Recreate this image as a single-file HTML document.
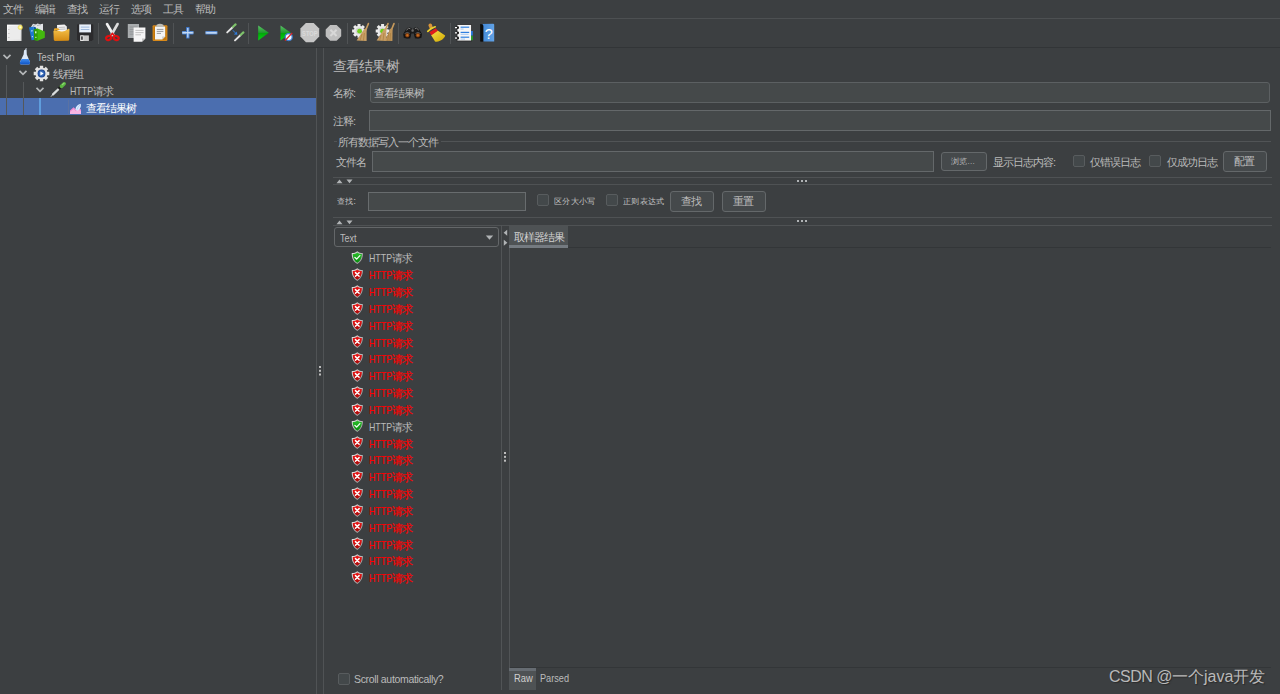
<!DOCTYPE html>
<html lang="zh">
<head>
<meta charset="utf-8">
<title>Apache JMeter</title>
<style>
*{box-sizing:border-box;margin:0;padding:0}
html,body{width:1280px;height:694px;overflow:hidden;background:#3c3f41}
body{position:relative;font-family:"Liberation Sans",sans-serif;font-size:10px;color:#bbbbbb;line-height:12px}
.a{position:absolute;white-space:nowrap}
.t{position:absolute;white-space:nowrap;line-height:12px;height:12px;font-size:11px;letter-spacing:-1px}
.s8{font-size:9px !important;letter-spacing:0 !important;transform:scale(0.92);transform-origin:0 50%;color:#c4c4c4}
.field{position:absolute;background:#45494a;border:1px solid #5f6365;border-radius:2px}
.btn{position:absolute;background:#45494b;border:1px solid #64686a;border-radius:3px;text-align:center;color:#bbbbbb;font-size:11px;letter-spacing:-1px;padding-right:2px}
.cb{position:absolute;width:12px;height:12px;background:#43484a;border:1px solid #585c5e;border-radius:2px}
.hl{position:absolute;height:1px}
.vl{position:absolute;width:1px}
.red{color:#ff0000;-webkit-text-stroke:0.15px #ff0000}
.rt{position:absolute;left:369px;white-space:nowrap;font-size:11px;letter-spacing:-1px;line-height:12px;height:12px}
.lat{display:inline-block;font-size:10.5px;letter-spacing:0;transform:scaleX(0.84);transform-origin:0 50%;margin-right:-4.4px}
.en{letter-spacing:0;font-size:10.5px;transform-origin:0 50%}

</style>
</head>
<body>
<svg width="0" height="0" style="position:absolute">
<defs>
<linearGradient id="gOk" x1="0" y1="0" x2="0" y2="1"><stop offset="0" stop-color="#2cc02c"/><stop offset="1" stop-color="#068a0c"/></linearGradient>
<linearGradient id="gErr" x1="0" y1="0" x2="0" y2="1"><stop offset="0" stop-color="#f01818"/><stop offset="1" stop-color="#a80606"/></linearGradient>
<linearGradient id="gSil" x1="0" y1="0" x2="1" y2="1"><stop offset="0" stop-color="#e8e8e8"/><stop offset="1" stop-color="#8a8a8a"/></linearGradient>
<g id="shOk">
<path d="M6.5 0.3 C5 1.6 3 2.2 0.8 2.2 C0.5 6.5 2 10.8 6.5 13.4 C11 10.8 12.5 6.5 12.2 2.2 C10 2.2 8 1.6 6.5 0.3Z" fill="url(#gSil)"/>
<path d="M6.5 1.5 C5.2 2.5 3.6 3.1 1.8 3.2 C1.7 6.6 2.9 10 6.5 12.3 C10.1 10 11.3 6.6 11.2 3.2 C9.4 3.1 7.8 2.5 6.5 1.5Z" fill="url(#gOk)"/>
<path d="M4 6.6 L5.8 8.4 L9.2 4.8" fill="none" stroke="#f4fff4" stroke-width="1.4" stroke-linecap="round" stroke-linejoin="round"/>
</g>
<g id="shErr">
<path d="M6.5 0.3 C5 1.6 3 2.2 0.8 2.2 C0.5 6.5 2 10.8 6.5 13.4 C11 10.8 12.5 6.5 12.2 2.2 C10 2.2 8 1.6 6.5 0.3Z" fill="url(#gSil)"/>
<path d="M6.5 1.5 C5.2 2.5 3.6 3.1 1.8 3.2 C1.7 6.6 2.9 10 6.5 12.3 C10.1 10 11.3 6.6 11.2 3.2 C9.4 3.1 7.8 2.5 6.5 1.5Z" fill="url(#gErr)"/>
<path d="M4.6 4.8 L8.4 8.6 M8.4 4.8 L4.6 8.6" fill="none" stroke="#fff" stroke-width="1.5" stroke-linecap="round"/>
</g>
</defs>
</svg>

<!-- menu bar -->
<div class="t" style="left:3px;top:2.5px">文件</div>
<div class="t" style="left:35px;top:2.5px">编辑</div>
<div class="t" style="left:67px;top:2.5px">查找</div>
<div class="t" style="left:99px;top:2.5px">运行</div>
<div class="t" style="left:131px;top:2.5px">选项</div>
<div class="t" style="left:163px;top:2.5px">工具</div>
<div class="t" style="left:195px;top:2.5px">帮助</div>
<div class="hl" style="left:0;top:18px;width:1280px;background:#4d5052"></div>
<div class="hl" style="left:0;top:47px;width:1280px;background:#323537"></div>

<!-- toolbar icons -->
<svg class="a" style="left:0;top:19px" width="520" height="28" viewBox="0 19 520 28">
<defs>
<linearGradient id="gPage" x1="0" y1="0" x2="1" y2="1"><stop offset="0" stop-color="#ffffff"/><stop offset="1" stop-color="#d9d9d9"/></linearGradient>
<linearGradient id="gFold" x1="0" y1="0" x2="0" y2="1"><stop offset="0" stop-color="#f5c24a"/><stop offset="1" stop-color="#d48a12"/></linearGradient>
<linearGradient id="gRun" x1="0" y1="0" x2="0" y2="1"><stop offset="0" stop-color="#5fc46a"/><stop offset="0.48" stop-color="#1f9a2c"/><stop offset="0.52" stop-color="#00a808"/><stop offset="1" stop-color="#08d414"/></linearGradient>
<linearGradient id="gBroomY" x1="0" y1="0" x2="1" y2="1"><stop offset="0" stop-color="#f6e04a"/><stop offset="1" stop-color="#d0a800"/></linearGradient>
<linearGradient id="gBlueBk" x1="0" y1="0" x2="1" y2="0"><stop offset="0" stop-color="#3f86d6"/><stop offset="1" stop-color="#62a3e6"/></linearGradient>
<linearGradient id="gPlus" x1="0" y1="0" x2="0" y2="1"><stop offset="0" stop-color="#3a74c8"/><stop offset="0.5" stop-color="#a9c8ee"/><stop offset="1" stop-color="#3a74c8"/></linearGradient>
<radialGradient id="gLens"><stop offset="0" stop-color="#e0802a"/><stop offset="1" stop-color="#6a2c06"/></radialGradient>
<radialGradient id="gStar"><stop offset="0" stop-color="#ffffff"/><stop offset="0.45" stop-color="#fff27a"/><stop offset="1" stop-color="#e8d23a" stop-opacity="0.6"/></radialGradient>
</defs>
<!-- separators -->
<g fill="#505355">
<rect x="98" y="23" width="1" height="21"/><rect x="173" y="23" width="1" height="21"/><rect x="248" y="23" width="1" height="21"/>
<rect x="347" y="23" width="1" height="21"/><rect x="398" y="23" width="1" height="21"/><rect x="450" y="23" width="1" height="21"/>
</g>
<!-- new -->
<rect x="7" y="24.6" width="14.5" height="16.4" fill="url(#gPage)"/>
<rect x="8.4" y="26" width="11.8" height="13.6" fill="#ececec"/>
<rect x="8" y="29" width="1.6" height="0.9" fill="#c8c8c8"/><rect x="8" y="33" width="1.6" height="0.9" fill="#c8c8c8"/><rect x="8" y="37" width="1.6" height="0.9" fill="#c8c8c8"/>
<circle cx="20.3" cy="27.3" r="2.6" fill="url(#gStar)"/>
<!-- templates -->
<path d="M31 27 L33 23.8 L36 24.4 L37.5 23.6 L40 24.3 L43 23.7 L43 33 L31 33Z" fill="#e4e6e8"/>
<path d="M33 25.5 L35.5 24.8 M37 25.5 L41 24.6" stroke="#9aa0a6" stroke-width="0.8"/>
<path d="M29 27.6 L33.5 26.4 L35.6 39.6 L31.6 40.2Z" fill="#1e78d2"/>
<path d="M33.5 26.4 L36 27.5 L36.5 40.6 L35.6 39.6Z" fill="#0e57a4"/>
<path d="M33.8 29.5 L37.5 28.5 L44.8 31.5 L44.8 37.8 L37.6 40.8 L34.2 40Z" fill="#43b80e"/>
<path d="M33.8 29.5 L37.5 28.5 L37.6 40.8 L34.2 40Z" fill="#2f9a06"/>
<rect x="31" y="30.5" width="1.6" height="1" fill="#cfe6ff" transform="rotate(-12 31 30.5)"/><rect x="31.8" y="36.2" width="1.2" height="1" fill="#cfe6ff"/>
<rect x="35" y="31.3" width="1.5" height="2" fill="#d4f5bf"/><rect x="35.2" y="36.8" width="1.3" height="1" fill="#d4f5bf"/>
<!-- open -->
<path d="M57 25 L64.5 24.4 L66.8 26.6 L67 33 L57.4 33Z" fill="#f4f4f4"/>
<path d="M58.5 27.5 L65.3 27.1 M58.5 29.4 L65.6 29" stroke="#b8b8b8" stroke-width="0.9"/>
<path d="M54 29.2 Q54 28.2 55 28.2 L58.4 28.2 L59.6 30 L53.8 31Z" fill="#e9a625"/>
<path d="M53.4 31 Q59 30.2 61 31.4 Q63.5 32.4 68.6 28.8 Q69.6 28.6 69.5 30 L69.2 39.6 Q69.1 40.8 68 40.8 L55 40.9 Q53.9 40.9 53.8 39.8Z" fill="url(#gFold)"/>
<!-- save -->
<path d="M77 25 Q77 24.2 77.8 24.2 L92.4 24.2 Q93.3 24.2 93.3 25 L93.3 39.2 L91.8 41 L78.5 41 L77 39.4Z" fill="#2b2b2d"/>
<rect x="79.2" y="24.4" width="11.8" height="8" fill="#e8f0fa"/>
<rect x="80.8" y="26.6" width="8.6" height="1" fill="#9db8dc"/><rect x="80.8" y="29" width="8.6" height="1" fill="#9db8dc"/>
<rect x="80.3" y="35.4" width="8.6" height="5.6" fill="#c9c9c9"/>
<rect x="80.3" y="35.4" width="3.2" height="5.6" fill="#e6e6e6"/>
<rect x="81.2" y="36.4" width="1.5" height="3.4" fill="#2b2b2d"/>
<!-- cut -->
<path d="M107 24 L114 36" stroke="#f2f2f2" stroke-width="2.6" stroke-linecap="round"/>
<path d="M117.6 24 L110.8 36" stroke="#dcdcdc" stroke-width="2.6" stroke-linecap="round"/>
<ellipse cx="108.6" cy="38" rx="2.6" ry="2" fill="none" stroke="#e01010" stroke-width="2.2" transform="rotate(-25 108.6 38)"/>
<ellipse cx="116.2" cy="38" rx="2.6" ry="2" fill="none" stroke="#e01010" stroke-width="2.2" transform="rotate(25 116.2 38)"/>
<path d="M110.4 35.6 L112.4 33.4 L114.4 35.6" stroke="#e01010" stroke-width="1.6" fill="none"/>
<!-- copy -->
<rect x="127.8" y="24" width="11.2" height="14" fill="#a9adaf"/>
<path d="M129.6 27 H137.4 M129.6 29.4 H137.4 M129.6 31.8 H137.4 M129.6 34.2 H137.4" stroke="#8d9193" stroke-width="0.8"/>
<path d="M133.6 27.4 L145.4 27.4 L145.4 38.4 L142 41.8 L133.6 41.8Z" fill="#f6f6f6"/>
<path d="M145.4 38.4 L142 38.4 L142 41.8Z" fill="#c4c4c4"/>
<path d="M135.4 30.4 H143.6 M135.4 32.6 H143.6 M135.4 34.8 H141" stroke="#bcbcbc" stroke-width="0.9"/>
<!-- paste -->
<rect x="152.6" y="25.2" width="14.8" height="15.8" rx="1" fill="#d98a1a"/>
<rect x="153.6" y="26.2" width="12.8" height="13.8" rx="0.6" fill="#c27608"/>
<path d="M155 26.4 L165.2 26.4 L165.2 36.6 L162.2 39.6 L155 39.6Z" fill="#f4f4f4"/>
<path d="M165.2 36.6 L162.2 36.6 L162.2 39.6Z" fill="#cccccc"/>
<path d="M156.6 24.8 Q160 22.6 163.4 24.8 L163.8 27 L156.2 27Z" fill="#bdbcb4"/>
<path d="M156.8 29.4 H163.4 M156.8 31.4 H163.4 M156.8 33.4 H161" stroke="#8e8e8e" stroke-width="0.9"/>
<!-- plus / minus -->
<rect x="182" y="31" width="11.6" height="3.4" rx="0.6" fill="url(#gPlus)"/>
<rect x="186.1" y="27" width="3.4" height="11.6" rx="0.6" fill="#3f78cc"/>
<rect x="187.1" y="28" width="1.4" height="9.6" fill="#b8d2f0"/>
<rect x="183" y="32" width="9.6" height="1.4" fill="#c4daf4"/>
<rect x="205.4" y="31" width="12" height="3.6" rx="0.6" fill="url(#gPlus)"/>
<rect x="206.4" y="32.1" width="10" height="1.4" fill="#c4daf4"/>
<!-- toggle -->
<path d="M227.2 32.4 L232.6 27.2" stroke="#e4e4e4" stroke-width="1.9" stroke-linecap="round"/>
<path d="M233 26.8 L235.6 24.4" stroke="#7dc26a" stroke-width="2.2" stroke-linecap="round"/>
<path d="M235 40.4 L240.4 35.2" stroke="#e4e4e4" stroke-width="1.9" stroke-linecap="round"/>
<path d="M240.8 34.8 L243.4 32.4" stroke="#7dc26a" stroke-width="2.2" stroke-linecap="round"/>
<path d="M232.6 30.2 L235.8 33.2" stroke="#2f7ad8" stroke-width="1" fill="none"/>
<path d="M237.4 34.8 L233.8 34.4 L236.8 31.4Z" fill="#2f7ad8"/>
<!-- run -->
<path d="M258.2 25.4 L268.8 32.8 L258.2 40.4Z" fill="url(#gRun)"/>
<!-- run no timers -->
<path d="M280.5 25.4 L290.8 32.8 L280.5 40.4Z" fill="url(#gRun)"/>
<circle cx="288.7" cy="37.1" r="3.5" fill="#f4f8ff" stroke="#3f7fd0" stroke-width="1.2"/>
<path d="M285 40.6 L292.2 33" stroke="#e02020" stroke-width="1.2"/>
<!-- stop -->
<path d="M305.9 23 L313.7 23 L319.2 28.6 L319.2 36.6 L313.7 42.2 L305.9 42.2 L300.4 36.6 L300.4 28.6Z" fill="#c6c6c6"/>
<text x="309.8" y="35.5" text-anchor="middle" font-family="Liberation Sans, sans-serif" font-weight="bold" font-size="7.6" fill="#dadada" textLength="15.4" lengthAdjust="spacingAndGlyphs">STOP</text>
<!-- shutdown -->
<path d="M330.2 25 L336.6 25 L341.2 29.6 L341.2 36.2 L336.6 40.8 L330.2 40.8 L325.7 36.2 L325.7 29.6Z" fill="#bfbfbf"/>
<path d="M330.4 29.8 L336.6 36 M336.6 29.8 L330.4 36" stroke="#d8d8d8" stroke-width="2"/>
<!-- clear -->
<g id="gearW">
<circle cx="359" cy="30.9" r="5.2" fill="#ececec"/>
<g stroke="#ececec" stroke-width="3" stroke-linecap="butt">
<path d="M359 24 V37.8 M352.1 30.9 H365.9 M354.1 26 L363.9 35.8 M363.9 26 L354.1 35.8"/>
</g>
<circle cx="359" cy="30.9" r="3.4" fill="#d2d2d2"/>
</g>
<circle cx="359.6" cy="31.2" r="2.4" fill="#6fcf1c"/>
<path d="M368.4 23.6 L365.6 30.4" stroke="#c69a5c" stroke-width="1.6" stroke-linecap="round"/>
<path d="M366.6 28.4 L366.6 41 L356.6 40.6 L364.4 28.8Z" fill="#c9a066"/>
<path d="M362 34 L360 40.6 M364.4 33 L363.4 40.8" stroke="#a77c3e" stroke-width="0.7"/>
<!-- clear all -->
<use href="#gearW" x="23.6"/>
<circle cx="382.6" cy="31.2" r="2.4" fill="#6fcf1c"/>
<path d="M388 23.6 L385.2 30.4" stroke="#c69a5c" stroke-width="1.6" stroke-linecap="round"/>
<path d="M386.4 28.4 L386.4 41 L376.6 40.6 L384.2 28.8Z" fill="#c9a066"/>
<path d="M394 23.6 L391.2 30.4" stroke="#c69a5c" stroke-width="1.6" stroke-linecap="round"/>
<path d="M392.6 28.4 L392.4 41 L385 40.8 L390.2 28.8Z" fill="#bf9458"/>
<path d="M381 35 L379.6 40.6 M384 33 L383 40.8 M388.6 34 L387.6 40.8 M390.6 33 L390 40.8" stroke="#a77c3e" stroke-width="0.7"/>
<!-- binoculars -->
<path d="M405.8 29.4 L408.2 27.2 L411 27.8 L412.6 29.6 L414.2 27.8 L417 27.2 L419.4 29.4 L422 34 L421.4 38 L415 38.6 L413.8 33.6 L411.4 33.6 L410.2 38.6 L403.8 38 L403.2 34Z" fill="#1a1a1a"/>
<circle cx="407.2" cy="35" r="3.4" fill="#141414"/><circle cx="418" cy="35" r="3.4" fill="#141414"/>
<path d="M406.4 30.2 L408.6 28.2 L410.4 28.8" stroke="#8a8a8a" stroke-width="0.9" fill="none"/>
<path d="M418.8 30.2 L416.6 28.2 L414.8 28.8" stroke="#8a8a8a" stroke-width="0.9" fill="none"/>
<circle cx="407.3" cy="35.2" r="2.2" fill="url(#gLens)"/><circle cx="417.9" cy="35.2" r="2.2" fill="url(#gLens)"/>
<path d="M404.6 33.6 Q407.2 31.4 409.8 33.4" stroke="#7a7a7a" stroke-width="0.7" fill="none"/>
<path d="M415.4 33.4 Q418 31.4 420.6 33.6" stroke="#7a7a7a" stroke-width="0.7" fill="none"/>
<rect x="411.4" y="29.2" width="2.4" height="2.6" rx="0.8" fill="#6a6a6a"/>
<!-- broom yellow -->
<path d="M428.4 25.6 Q428.6 23.4 430.4 23.6 Q432 23.8 432.2 25.4 L433.2 28.6 L430.4 30 Z" fill="#d9963a"/>
<path d="M431 35 L437.6 30.6 L445.2 35.4 Q444.6 38.4 440 40.8 Q437 42.4 435 41.6 Q433.6 39 431 35Z" fill="url(#gBroomY)"/>
<path d="M429.4 32.2 L435.8 28.2 L437.8 30.8 L431.4 35.2Z" fill="#e01c1c"/>
<path d="M427.8 31.4 Q431 28 435.2 26.8" stroke="#ecd02a" stroke-width="1.7" stroke-linecap="round" fill="none"/>
<!-- function helper -->
<rect x="457" y="24.6" width="14.6" height="16.4" fill="#f6f6f6" stroke="#2a2a2a" stroke-width="0.8"/>
<g fill="#1c1c1c"><rect x="455.4" y="26.2" width="3.6" height="2.8" rx="1.2"/><rect x="455.4" y="31.4" width="3.6" height="2.8" rx="1.2"/><rect x="455.4" y="36.6" width="3.6" height="2.8" rx="1.2"/></g>
<g fill="#ffffff"><rect x="455" y="27" width="2" height="1.3"/><rect x="455" y="32.2" width="2" height="1.3"/><rect x="455" y="37.4" width="2" height="1.3"/></g>
<g fill="#2f7fe0"><rect x="460.6" y="26.6" width="8.6" height="1.2"/><rect x="460.6" y="31.8" width="8.6" height="1.2"/><rect x="460.6" y="36.6" width="8.6" height="1.2"/></g>
<g fill="#9cc2f2"><rect x="460.6" y="28.6" width="3" height="0.9"/><rect x="460.6" y="33.8" width="8" height="0.9"/><rect x="460.6" y="38.6" width="4.4" height="0.9"/></g>
<rect x="471" y="31" width="1.8" height="4.6" fill="#2a7ae0"/><rect x="471" y="35.8" width="1.8" height="4.4" fill="#2aa02a"/>
<!-- help -->
<rect x="480.4" y="24" width="4" height="17.4" fill="#101010"/>
<path d="M481.2 24 L493.4 23.8 L494.2 24.6 L494.2 41.4 L483.4 41.4 L483.4 25.4 Z" fill="url(#gBlueBk)"/>
<rect x="480.4" y="24.4" width="2.6" height="17" fill="#0c0c0c"/>
<text x="488.8" y="38.8" text-anchor="middle" font-family="Liberation Sans, sans-serif" font-size="14.5" fill="#ffffff">?</text>
</svg>

<!-- left tree -->
<div class="a" style="left:0;top:98px;width:316px;height:17px;background:#4b6eaf"></div>
<div class="vl" style="left:6px;top:65px;height:50px;background:#55585a"></div>
<div class="vl" style="left:23px;top:82px;height:33px;background:#55585a"></div>
<div class="vl" style="left:39px;top:98px;height:17px;width:2px;background:#5f9ddc"></div>
<div class="vl" style="left:68px;top:100px;height:14px;background:#5a72a3"></div>
<svg class="a" style="left:2px;top:53px" width="10" height="8" viewBox="0 0 10 8"><path d="M1.5 1.8 L5 5.3 L8.5 1.8" fill="none" stroke="#b4b7b9" stroke-width="1.7"/></svg>
<svg class="a" style="left:18px;top:69px" width="10" height="8" viewBox="0 0 10 8"><path d="M1.5 1.8 L5 5.3 L8.5 1.8" fill="none" stroke="#b4b7b9" stroke-width="1.7"/></svg>
<svg class="a" style="left:35px;top:86px" width="10" height="8" viewBox="0 0 10 8"><path d="M1.5 1.8 L5 5.3 L8.5 1.8" fill="none" stroke="#b4b7b9" stroke-width="1.7"/></svg>
<div class="t en" style="left:36.5px;top:51px;transform:scaleX(0.873)">Test Plan</div>
<div class="t" style="left:53px;top:68px">线程组</div>
<div class="t" style="left:70px;top:85px"><span class="lat">HTTP</span>请求</div>
<div class="t" style="left:86px;top:102px;color:#ffffff">查看结果树</div>
<!-- splitter -->
<div class="vl" style="left:316px;top:48px;height:646px;background:#505355"></div>
<div class="vl" style="left:323px;top:48px;height:646px;background:#505355"></div>
<div class="a" style="left:318.9px;top:365.8px;width:2.2px;height:2.2px;background:#bdbdbd;box-shadow:0 3.8px 0 #bdbdbd,0 7.5px 0 #bdbdbd"></div>
<!-- tree icons -->
<svg class="a" style="left:0;top:48px" width="100" height="70" viewBox="0 48 100 70">
<defs>
<linearGradient id="gFl" x1="0" y1="0" x2="0" y2="1"><stop offset="0" stop-color="#3f8cf0"/><stop offset="1" stop-color="#0d52c4"/></linearGradient>
<radialGradient id="gGb"><stop offset="0" stop-color="#5f9be8"/><stop offset="1" stop-color="#153f8e"/></radialGradient>
</defs>
<!-- flask -->
<path d="M25.6 49.2 L26.6 49.2 L26.8 54.6 L30 62 Q30.4 64.6 28 64.6 L22 64.6 Q19.4 64.6 20 62 L23.6 54.6 L24 50.4Z" fill="#dbe8f8"/>
<path d="M21.6 59 L28.6 59 L30 62 Q30.4 64.6 28 64.6 L22 64.6 Q19.4 64.6 20 62Z" fill="url(#gFl)"/>
<path d="M25.4 49 L26.6 48.4" stroke="#e8eef8" stroke-width="0.8"/>
<!-- gear -->
<g stroke="#e4e4e4" stroke-width="3.4"><path d="M41.5 65.7 V81.3 M33.7 73.5 H49.3 M36 68 L47 79 M47 68 L36 79"/></g>
<circle cx="41.5" cy="73.5" r="6" fill="#e4e4e4"/>
<circle cx="41.5" cy="73.5" r="3.9" fill="url(#gGb)"/>
<path d="M40.4 71.6 L43.6 73.5 L40.4 75.4Z" fill="#ffffff"/>
<!-- pipette -->
<path d="M51.2 96.4 L53 94.2" stroke="#c9c9c9" stroke-width="1" stroke-linecap="round"/>
<path d="M53 94.4 L59.4 88.2" stroke="#d9dcdc" stroke-width="2.2" stroke-linecap="round"/>
<path d="M58.6 88.8 L60.8 86.8" stroke="#1c1c1c" stroke-width="3" />
<path d="M61.4 86.4 L64.2 83.8" stroke="#5ab540" stroke-width="3.6" stroke-linecap="round"/>
<path d="M62.4 84.6 L64 83.2" stroke="#8fd874" stroke-width="1.2" stroke-linecap="round"/>
<!-- result tree -->
<path d="M70 114 L70 110.4 L73.6 107.2 L76 109.6 L78.6 108 L81 109.4 L81 114Z" fill="#f08ad0"/>
<path d="M70 114 L70 112 L73.6 109 L76 111.2 L78.6 110 L81 111 L81 114Z" fill="#f7b4e2"/>
<path d="M75.4 109.4 Q76 104.8 80.8 103.8 Q81.4 108 78.2 110.6 Q76.4 111 75.4 109.4Z" fill="#dcecff"/>
<path d="M77 109.6 Q78 106.4 80.4 104.6" stroke="#9cc4f4" stroke-width="0.7" fill="none"/>
</svg>

<!-- main panel -->
<div class="a" style="left:333px;top:57.4px;font-size:14px;letter-spacing:-0.85px;line-height:18px;color:#bbbbbb">查看结果树</div>
<div class="t" style="left:333px;top:87px">名称:</div>
<div class="field" style="left:370px;top:82px;width:900px;height:21px;border-radius:3px;border-color:#5c6062"></div>
<div class="t" style="left:374px;top:87px">查看结果树</div>
<div class="t" style="left:333px;top:115px">注释:</div>
<div class="field" style="left:369px;top:110px;width:902px;height:21px;border-radius:0;border-color:#64686a"></div>
<!-- titled border -->
<div class="hl" style="left:334px;top:141px;width:3px;background:#515456"></div>
<div class="hl" style="left:441px;top:141px;width:830px;background:#515456"></div>
<div class="t" style="left:338px;top:136px">所有数据写入一个文件</div>
<div class="t" style="left:336px;top:156px">文件名</div>
<div class="field" style="left:372px;top:151px;width:562px;height:21px;border-radius:0;border-color:#64686a"></div>
<div class="btn" style="left:941px;top:152px;width:46px;height:19px;font-size:8px;letter-spacing:0.2px;line-height:17px">浏览...</div>
<div class="t" style="left:993px;top:156px">显示日志内容:</div>
<div class="cb" style="left:1073px;top:155px"></div>
<div class="t" style="left:1090px;top:156px">仅错误日志</div>
<div class="cb" style="left:1149px;top:155px"></div>
<div class="t" style="left:1167px;top:156px">仅成功日志</div>
<div class="btn" style="left:1223px;top:151px;width:44px;height:21px;line-height:19px">配置</div>
<!-- separator 1 -->
<div class="hl" style="left:333px;top:177px;width:939px;background:#4f5254"></div>
<div class="hl" style="left:333px;top:184px;width:939px;background:#4f5254"></div>
<svg class="a" style="left:336px;top:179.3px" width="18" height="5" viewBox="0 0 18 5"><path d="M0.5 4.2 L3.5 0.6 L6.5 4.2Z M10.5 0.6 L16.5 0.6 L13.5 4.2Z" fill="#b0b3b5"/></svg>
<div class="a" style="left:797px;top:180px;width:2px;height:2px;background:#b0b3b5;box-shadow:4px 0 0 #b0b3b5,8px 0 0 #b0b3b5"></div>
<!-- search row -->
<div class="t s8" style="left:337px;top:195px">查找:</div>
<div class="field" style="left:368px;top:192px;width:158px;height:19px;border-radius:0;border-color:#686c6e"></div>
<div class="cb" style="left:537px;top:194px"></div>
<div class="t s8" style="left:554px;top:195px">区分大小写</div>
<div class="cb" style="left:606px;top:194px"></div>
<div class="t s8" style="left:623px;top:195px">正则表达式</div>
<div class="btn" style="left:670px;top:191px;width:44px;height:21px;line-height:19px">查找</div>
<div class="btn" style="left:722px;top:191px;width:44px;height:21px;line-height:19px">重置</div>
<!-- separator 2 -->
<div class="hl" style="left:333px;top:217px;width:939px;background:#4f5254"></div>
<div class="hl" style="left:333px;top:224.5px;width:939px;background:#4f5254"></div>
<svg class="a" style="left:336px;top:219.5px" width="18" height="5" viewBox="0 0 18 5"><path d="M0.5 4.2 L3.5 0.6 L6.5 4.2Z M10.5 0.6 L16.5 0.6 L13.5 4.2Z" fill="#b0b3b5"/></svg>
<div class="a" style="left:797px;top:220px;width:2px;height:2px;background:#b0b3b5;box-shadow:4px 0 0 #b0b3b5,8px 0 0 #b0b3b5"></div>
<!-- combo -->
<div class="a" style="left:334px;top:227px;width:165px;height:20px;border:1px solid #646769;border-radius:3px;background:#3c3f41"></div>
<div class="t en" style="left:339.5px;top:232px;transform:scaleX(0.863)">Text</div>
<svg class="a" style="left:485px;top:235px" width="9" height="6" viewBox="0 0 9 6"><path d="M0.8 0.6 L8.2 0.6 L4.5 4.8Z" fill="#b0b3b5"/></svg>
<!-- inner splitter -->
<div class="vl" style="left:501px;top:225px;height:465px;background:#515456"></div>
<div class="vl" style="left:509px;top:225px;height:465px;background:#515456"></div>
<svg class="a" style="left:503px;top:229px" width="5" height="18" viewBox="0 0 5 18"><path d="M4.2 0.8 L4.2 6.8 L0.6 3.8Z M0.8 10.8 L0.8 16.8 L4.4 13.8Z" fill="#b0b3b5"/></svg>
<div class="a" style="left:504px;top:452.3px;width:2.2px;height:2.2px;background:#bdbdbd;box-shadow:0 3.85px 0 #bdbdbd,0 7.7px 0 #bdbdbd"></div>
<!-- tab -->
<div class="hl" style="left:510px;top:247px;width:761px;background:#333638"></div>
<div class="a" style="left:509px;top:226px;width:59px;height:22px;background:#4e5254"></div>
<div class="a" style="left:509px;top:245px;width:59px;height:3px;background:#747a80"></div>
<div class="t" style="left:514px;top:231px;color:#d0d0d0">取样器结果</div>

<svg class="a" style="left:351.2px;top:251.10px" width="12.6" height="13.5" viewBox="0 0 13 14"><use href="#shOk"/></svg><div class="rt" style="top:252.40px"><span class="lat">HTTP</span>请求</div>
<svg class="a" style="left:351.2px;top:267.93px" width="12.6" height="13.5" viewBox="0 0 13 14"><use href="#shErr"/></svg><div class="rt red" style="top:269.23px"><span class="lat">HTTP</span>请求</div>
<svg class="a" style="left:351.2px;top:284.76px" width="12.6" height="13.5" viewBox="0 0 13 14"><use href="#shErr"/></svg><div class="rt red" style="top:286.06px"><span class="lat">HTTP</span>请求</div>
<svg class="a" style="left:351.2px;top:301.59px" width="12.6" height="13.5" viewBox="0 0 13 14"><use href="#shErr"/></svg><div class="rt red" style="top:302.89px"><span class="lat">HTTP</span>请求</div>
<svg class="a" style="left:351.2px;top:318.42px" width="12.6" height="13.5" viewBox="0 0 13 14"><use href="#shErr"/></svg><div class="rt red" style="top:319.72px"><span class="lat">HTTP</span>请求</div>
<svg class="a" style="left:351.2px;top:335.25px" width="12.6" height="13.5" viewBox="0 0 13 14"><use href="#shErr"/></svg><div class="rt red" style="top:336.55px"><span class="lat">HTTP</span>请求</div>
<svg class="a" style="left:351.2px;top:352.08px" width="12.6" height="13.5" viewBox="0 0 13 14"><use href="#shErr"/></svg><div class="rt red" style="top:353.38px"><span class="lat">HTTP</span>请求</div>
<svg class="a" style="left:351.2px;top:368.91px" width="12.6" height="13.5" viewBox="0 0 13 14"><use href="#shErr"/></svg><div class="rt red" style="top:370.21px"><span class="lat">HTTP</span>请求</div>
<svg class="a" style="left:351.2px;top:385.74px" width="12.6" height="13.5" viewBox="0 0 13 14"><use href="#shErr"/></svg><div class="rt red" style="top:387.04px"><span class="lat">HTTP</span>请求</div>
<svg class="a" style="left:351.2px;top:402.57px" width="12.6" height="13.5" viewBox="0 0 13 14"><use href="#shErr"/></svg><div class="rt red" style="top:403.87px"><span class="lat">HTTP</span>请求</div>
<svg class="a" style="left:351.2px;top:419.40px" width="12.6" height="13.5" viewBox="0 0 13 14"><use href="#shOk"/></svg><div class="rt" style="top:420.70px"><span class="lat">HTTP</span>请求</div>
<svg class="a" style="left:351.2px;top:436.23px" width="12.6" height="13.5" viewBox="0 0 13 14"><use href="#shErr"/></svg><div class="rt red" style="top:437.53px"><span class="lat">HTTP</span>请求</div>
<svg class="a" style="left:351.2px;top:453.06px" width="12.6" height="13.5" viewBox="0 0 13 14"><use href="#shErr"/></svg><div class="rt red" style="top:454.36px"><span class="lat">HTTP</span>请求</div>
<svg class="a" style="left:351.2px;top:469.89px" width="12.6" height="13.5" viewBox="0 0 13 14"><use href="#shErr"/></svg><div class="rt red" style="top:471.19px"><span class="lat">HTTP</span>请求</div>
<svg class="a" style="left:351.2px;top:486.72px" width="12.6" height="13.5" viewBox="0 0 13 14"><use href="#shErr"/></svg><div class="rt red" style="top:488.02px"><span class="lat">HTTP</span>请求</div>
<svg class="a" style="left:351.2px;top:503.55px" width="12.6" height="13.5" viewBox="0 0 13 14"><use href="#shErr"/></svg><div class="rt red" style="top:504.85px"><span class="lat">HTTP</span>请求</div>
<svg class="a" style="left:351.2px;top:520.38px" width="12.6" height="13.5" viewBox="0 0 13 14"><use href="#shErr"/></svg><div class="rt red" style="top:521.68px"><span class="lat">HTTP</span>请求</div>
<svg class="a" style="left:351.2px;top:537.21px" width="12.6" height="13.5" viewBox="0 0 13 14"><use href="#shErr"/></svg><div class="rt red" style="top:538.51px"><span class="lat">HTTP</span>请求</div>
<svg class="a" style="left:351.2px;top:554.04px" width="12.6" height="13.5" viewBox="0 0 13 14"><use href="#shErr"/></svg><div class="rt red" style="top:555.34px"><span class="lat">HTTP</span>请求</div>
<svg class="a" style="left:351.2px;top:570.87px" width="12.6" height="13.5" viewBox="0 0 13 14"><use href="#shErr"/></svg><div class="rt red" style="top:572.17px"><span class="lat">HTTP</span>请求</div>
<!-- bottom -->
<div class="cb" style="left:338px;top:673px"></div>
<div class="t en" style="left:354px;top:673.2px;letter-spacing:-0.33px">Scroll automatically?</div>
<div class="hl" style="left:510px;top:667px;width:761px;background:#333638"></div>
<div class="a" style="left:509px;top:668px;width:27px;height:22px;background:#4e5254;border-top:3px solid #666c72"></div>
<div class="t en" style="left:513.5px;top:672px;transform:scaleX(0.89);color:#d0d0d0">Raw</div>
<div class="t en" style="left:539.7px;top:672px;transform:scaleX(0.874)">Parsed</div>
<div class="a" style="left:1109px;top:667px;font-size:16px;line-height:20px;color:#b9b9b9;text-shadow:1px 1px 1px #2a2a2a"><span style="letter-spacing:-0.5px">CSDN @</span>一个java开发</div>

</body>
</html>
